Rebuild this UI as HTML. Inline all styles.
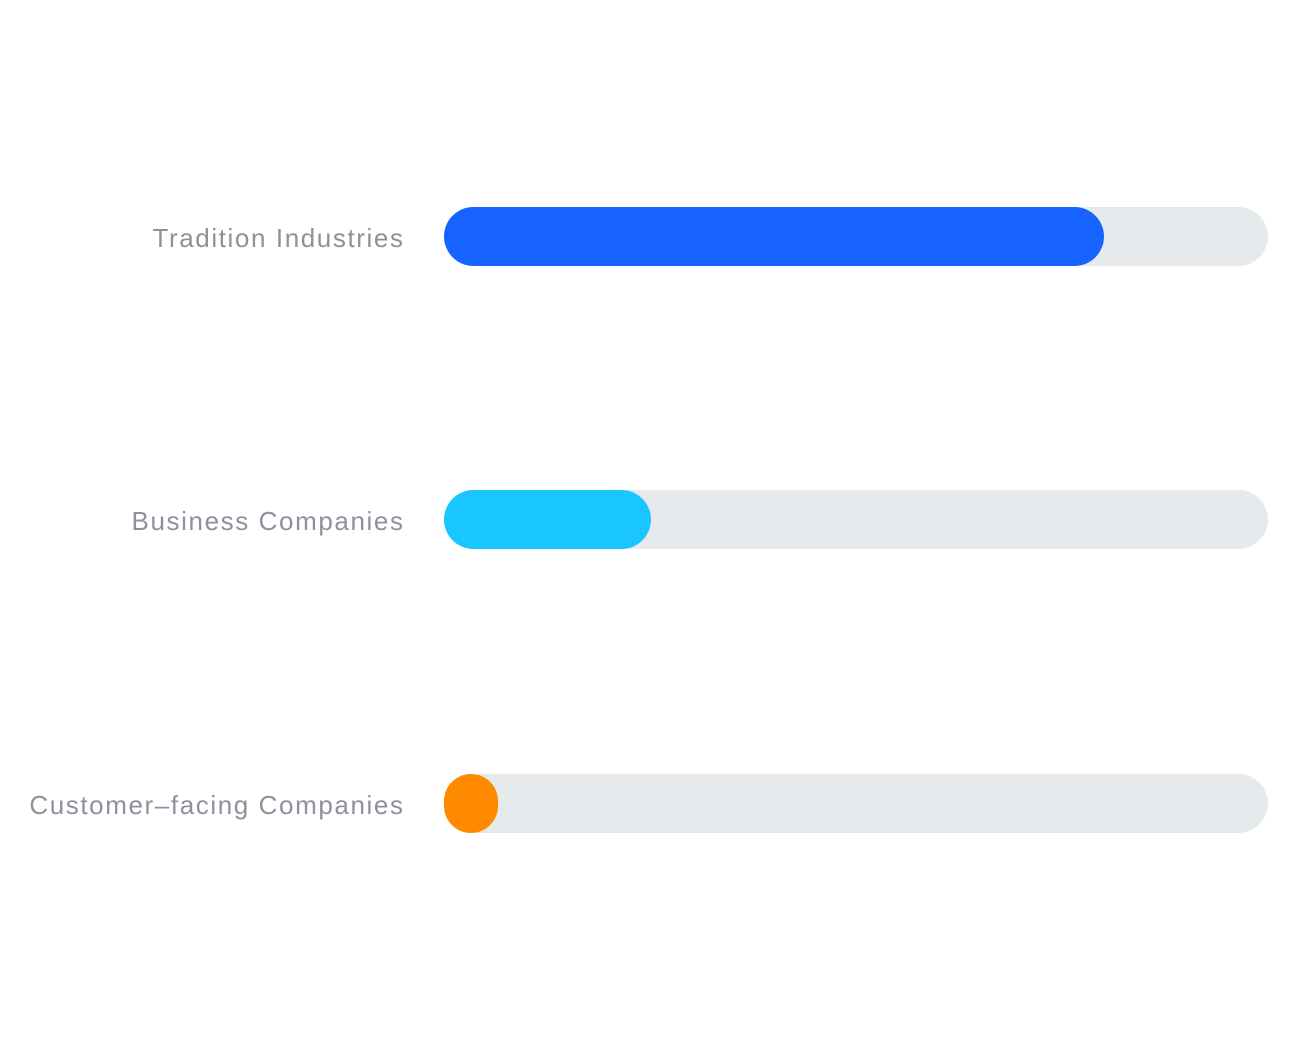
<!DOCTYPE html>
<html><head><style>
html,body{margin:0;padding:0;background:#fff;width:1292px;height:1040px;overflow:hidden}
.l{position:absolute;right:889px;font:26px "Liberation Sans",sans-serif;letter-spacing:1.6px;margin-right:-1.6px;color:#8c919c;white-space:nowrap;line-height:30px}
.t{position:absolute;left:444px;width:824px;height:59px;border-radius:30px;background:#e7eaed}
.b{position:absolute;left:0;top:0;height:59px;border-radius:30px}
</style></head><body>
<div class="l" style="top:223px">Tradition Industries</div>
<div class="t" style="top:207px"><div class="b" style="width:660px;background:#1763ff"></div></div>
<div class="l" style="top:506px">Business Companies</div>
<div class="t" style="top:490px"><div class="b" style="width:207px;background:#1ac6ff"></div></div>
<div class="l" style="top:790px">Customer–facing Companies</div>
<div class="t" style="top:774px"><div class="b" style="width:54px;background:#ff8a00"></div></div>
</body></html>
